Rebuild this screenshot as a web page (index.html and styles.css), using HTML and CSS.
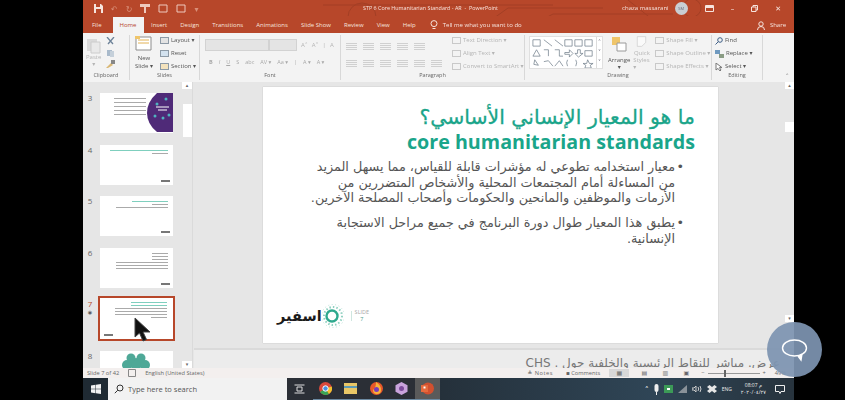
FILE: index.html
```html
<!DOCTYPE html>
<html lang="en">
<head>
  <meta charset="UTF-8" />
  <title>STP 6 Core Humanitarian Standard - AR - PowerPoint</title>
  <link rel="stylesheet" href="styles.css">
</head>
<body>
  <div class="pantalla">
    <div class="app">

      <!-- Barra de titulo -->
      <header class="titulo">
        <svg class="circuito" width="711" height="33" viewBox="0 0 711 33" fill="none" stroke="#a33f25" stroke-width="1">
          <path d="M240 5H430L470 5M265 17a14 14 0 1 0 28 0a14 14 0 1 0-28 0M300 26H400L425 8H520M440 30L470 14H590M545 0L575 24H640M600 8a9 9 0 1 0 18 0a9 9 0 1 0-18 0"/>
        </svg>
        <div class="rapido">
          <svg width="9" height="9" viewBox="0 0 9 9"><path d="M0 0H7L9 2V9H0Z" fill="#f6e4de"/><path d="M2 0H6V3H2ZM2 5H7V9H2Z" fill="#b7472a"/></svg>
          <span class="tenue">↶</span><span class="tenue">↻</span>
          <svg width="10" height="9" viewBox="0 0 10 9"><path d="M0 0H10V3H6V9H4V3H0Z" fill="#eec9bd"/></svg>
          <svg width="10" height="9" viewBox="0 0 10 9"><path d="M1 1H9V8H1Z" fill="none" stroke="#eec9bd"/></svg>
          <svg width="10" height="9" viewBox="0 0 10 9"><path d="M1 1H9V8H1Z" fill="none" stroke="#eec9bd"/></svg>
          <span class="tenue">▾</span>
        </div>
        <div class="documento">STP 6 Core Humanitarian Standard - AR  -  PowerPoint</div>
        <div class="cuenta">
          <span>chaza massarani</span>
          <span class="avatar">SM</span>
          <svg width="9" height="7" viewBox="0 0 9 7"><path d="M.5.5H8.5V6.5H.5Z" fill="none" stroke="#f6e4de"/><path d="M1 1H8V3H1Z" fill="#f6e4de"/></svg>
          <span class="ventana">–</span>
          <svg width="7" height="7" viewBox="0 0 7 7"><path d="M.5 2H5V6.5H.5ZM2 2V.5H6.5V5H5" fill="none" stroke="#f6e4de"/></svg>
          <span class="ventana">✕</span>
        </div>
      </header>

      <!-- Pestañas -->
      <nav class="pestanas">
        <a class="archivo">File</a>
        <a class="activa">Home</a>
        <a>Insert</a>
        <a>Design</a>
        <a>Transitions</a>
        <a>Animations</a>
        <a>Slide Show</a>
        <a>Review</a>
        <a>View</a>
        <a>Help</a>
        <a class="ayuda">
          <svg width="8" height="10" viewBox="0 0 8 10" fill="none" stroke="#f6e4de"><circle cx="4" cy="3.6" r="3"/><path d="M2.5 8.5H5.5"/></svg>
          Tell me what you want to do
        </a>
        <a class="compartir">
          <svg width="8" height="9" viewBox="0 0 8 9" fill="none" stroke="#f6e4de"><circle cx="4" cy="3" r="2.2"/><path d="M.5 9a3.5 3.5 0 0 1 7 0"/></svg>
          Share
        </a>
      </nav>

      <!-- Cinta de opciones -->
      <section class="cinta">
        <div class="grupo g-portapapeles">
          <div class="grupo-cuerpo">
            <div class="columna centro">
              <svg width="15" height="18" viewBox="0 0 15 18"><path d="M1 3H11V15H1Z" fill="#d9d9d9"/><path d="M5 6H14V17H5Z" fill="#e9e9e9" stroke="#ccc"/></svg>
              <span class="gris">Paste</span><span class="gris">▾</span>
            </div>
            <div class="columna iconos-mini">
              <svg width="9" height="9" viewBox="0 0 9 9" fill="none" stroke="#6d8298" stroke-width="1.3"><path d="M1 0L7 7M8 0L2 7"/></svg>
              <svg width="11" height="8" viewBox="0 0 11 8"><path d="M1 1H6V7H1Z" fill="#a9bacb"/><path d="M4 2H8V8H4Z" fill="#c5d0da"/></svg>
              <svg width="9" height="8" viewBox="0 0 9 8"><path d="M0 8L5 3L7 5L2 8Z" fill="#d9b774"/><path d="M5 0H9V4H5Z" fill="#888"/></svg>
            </div>
          </div>
          <div class="grupo-nombre">Clipboard</div>
        </div>

        <div class="grupo g-diapositivas">
          <div class="grupo-cuerpo">
            <div class="columna centro nueva">
              <svg width="17" height="15" viewBox="0 0 17 15"><path d="M1 1H16V14H1Z" fill="#fff" stroke="#8d8d8d"/><path d="M3 4H14M3 7H14" stroke="#e2b254"/><path d="M0 0H5V3H0Z" fill="#efc56a"/></svg>
              <span>New</span><span>Slide ▾</span>
            </div>
            <div class="columna filas">
              <span><i class="mini"></i>Layout ▾</span>
              <span><i class="mini azul"></i>Reset</span>
              <span><i class="mini naranja"></i>Section ▾</span>
            </div>
          </div>
          <div class="grupo-nombre">Slides</div>
        </div>

        <div class="grupo g-fuente">
          <div class="grupo-cuerpo columna-fuente">
            <div class="fila-fuente">
              <span class="caja-fuente"></span><span class="caja-tam"></span>
              <span class="gris">A˄</span><span class="gris">A˅</span><span class="gris">|</span><span class="gris">A</span>
            </div>
            <div class="fila-fuente formato">
              <b>B</b><i>I</i><u>U</u><span>S</span><span>abc</span><span>AV ▾</span><span>Aa ▾</span><span>|</span><span>A ▾</span><span>A ▾</span>
            </div>
          </div>
          <div class="grupo-nombre">Font</div>
        </div>

        <div class="grupo g-parrafo">
          <div class="grupo-cuerpo parrafo-cuerpo">
            <div class="columna-fuente">
              <div class="fila-fuente"><i class="linea"></i><i class="linea"></i><i class="linea"></i><i class="linea"></i><i class="linea"></i></div>
              <div class="fila-fuente"><i class="linea"></i><i class="linea"></i><i class="linea"></i><i class="linea"></i><i class="linea"></i><i class="linea"></i></div>
            </div>
            <div class="columna filas gris">
              <span><i class="mini tenue-mini"></i>Text Direction ▾</span>
              <span><i class="mini tenue-mini"></i>Align Text ▾</span>
              <span><i class="mini tenue-mini"></i>Convert to SmartArt ▾</span>
            </div>
          </div>
          <div class="grupo-nombre">Paragraph</div>
        </div>

        <div class="grupo g-dibujo">
          <div class="grupo-cuerpo">
            <div class="formas">
              <svg width="66" height="31" viewBox="0 0 72 34" fill="none" stroke="#6f7d8a" stroke-width=".8">
                <path d="M3 3H11V10H3ZM15 3L24 10M27 3L36 10M38 3H46V10H38ZM49 3H57V10H49ZM60 3H68V10H60Z"/>
                <path d="M7 14L11 21H3ZM15 14H20V21M27 14H32V21L36 21M38 17H43V14L47 18L43 22V19H38ZM52 14H55V18H58L53 22L49 18H52ZM60 15H68V21H60Z"/>
                <path d="M5 25L9 31L4 30ZM15 27L20 26L25 32M27 32L32 26L36 32M41 25Q39 28 41 32M50 25Q52 28 50 32M63 25L65 29L69 29L66 31L67 34H60L61 31L58 29L62 29Z"/>
              </svg>
              <div class="formas-flechas"><span>˄</span><span>˅</span><span>˅</span></div>
            </div>
            <div class="columna centro organizar">
              <svg width="17" height="17" viewBox="0 0 17 17"><path d="M1 1H9V9H1Z" fill="#efc56a"/><path d="M6 7H15V15H6Z" fill="#fff" stroke="#9a9a9a"/></svg>
              <span>Arrange</span><span>▾</span>
            </div>
            <div class="columna centro rapidos gris">
              <svg width="17" height="17" viewBox="0 0 17 17"><path d="M2 1H15V10L9 16H2Z" fill="#fafafa" stroke="#c8c8c8"/></svg>
              <span>Quick</span><span>Styles ▾</span>
            </div>
            <div class="columna filas gris">
              <span><i class="mini tenue-mini"></i>Shape Fill ▾</span>
              <span><i class="mini tenue-mini"></i>Shape Outline ▾</span>
              <span><i class="mini tenue-mini"></i>Shape Effects ▾</span>
            </div>
          </div>
          <div class="grupo-nombre">Drawing</div>
        </div>

        <div class="grupo g-edicion">
          <div class="grupo-cuerpo">
            <div class="columna filas">
              <span><svg width="8" height="8" viewBox="0 0 8 8" fill="none" stroke="#3f5f86"><circle cx="5" cy="3" r="2.3"/><path d="M3.4 4.6L.5 7.5"/></svg>Find</span>
              <span><svg width="9" height="8" viewBox="0 0 9 8"><path d="M0 0H5V4H0Z" fill="#6f9ac0"/><path d="M4 4H9V8H4Z" fill="#8a9c84"/></svg>Replace ▾</span>
              <span><svg width="8" height="8" viewBox="0 0 8 8" fill="#fff" stroke="#777"><path d="M1 0V7L3 5.4L5 8L6 7L4.4 4.6H7Z"/></svg>Select ▾</span>
            </div>
          </div>
          <div class="grupo-nombre">Editing</div>
        </div>
        <div class="plegar">˄</div>
      </section>

      <!-- Area de trabajo -->
      <main class="trabajo">
        <aside class="panel">
          <div class="miniaturas">
            <div class="mini-fila">
              <span class="numero">3</span>
              <div class="miniatura m3">
                <div class="m3-texto"><i></i><i></i><i></i><i></i><i></i></div>
                <svg class="m3-circulo" width="26" height="39" viewBox="0 0 26 39"><path d="M26 0H10Q0 9 0 20Q0 31 10 39H26Z" fill="#4f2a78"/><circle cx="10" cy="11" r="1.5" fill="#4fb3bf"/><circle cx="19" cy="6" r="1.5" fill="#4fb3bf"/><circle cx="8" cy="23" r="1.5" fill="#4fb3bf"/><circle cx="16" cy="25" r="1.5" fill="#4fb3bf"/><circle cx="22" cy="22" r="1.5" fill="#4fb3bf"/><path d="M9 14H22M11 17H20" stroke="#fff"/></svg>
              </div>
            </div>
            <div class="mini-fila">
              <span class="numero">4</span>
              <div class="miniatura">
                <i class="m-titulo"></i><i class="m-linea corta"></i>
                <i class="m-logo"></i>
              </div>
            </div>
            <div class="mini-fila">
              <span class="numero">5</span>
              <div class="miniatura">
                <i class="m-titulo corto"></i><i class="m-linea corta"></i><i class="m-linea"></i>
                <i class="m-logo"></i>
              </div>
            </div>
            <div class="mini-fila">
              <span class="numero">6</span>
              <div class="miniatura">
                <i class="m-linea corta gris2"></i><i class="m-linea corta gris2"></i><i class="m-linea corta gris2"></i><i class="m-linea gris2"></i><i class="m-linea gris2"></i><i class="m-linea gris2"></i>
                <i class="m-logo"></i>
              </div>
            </div>
            <div class="mini-fila actual">
              <span class="numero rojo">7<small>◉</small></span>
              <div class="miniatura">
                <i class="m-titulo corto"></i><i class="m-titulo corto"></i><i class="m-linea gris2"></i><i class="m-linea gris2"></i><i class="m-linea gris2"></i><i class="m-linea corta gris2"></i>
                <i class="m-logo izq"></i>
              </div>
            </div>
            <div class="mini-fila">
              <span class="numero">8</span>
              <div class="miniatura m8">
                <svg width="73" height="18" viewBox="0 0 73 18"><g fill="#4ea897"><circle cx="36" cy="13" r="6"/><circle cx="27" cy="14" r="5"/><circle cx="45" cy="14" r="5"/><circle cx="31" cy="7" r="4.5"/><circle cx="41" cy="7" r="4.5"/></g></svg>
              </div>
            </div>
            <!-- Cursor sobre la miniatura -->
            <svg class="cursor" width="18" height="26" viewBox="0 0 18 26"><path d="M1 1V20L5.500 16L9 24L12.500 22.500L9 15H16Z" fill="#111" stroke="#444"/></svg>
          </div>
          <div class="barra-panel">
            <span class="flecha">▴</span>
            <span class="pulgar"></span>
            <span class="flecha">▾</span>
          </div>
        </aside>

        <div class="editor">
          <div class="lienzo">
            <article class="diapositiva">
              <div class="encabezado">
                <h1 lang="ar" dir="rtl">ما هو المعيار الإنساني الأساسي؟</h1>
                <h2>core humanitarian standards</h2>
              </div>
              <div class="contenido" lang="ar" dir="rtl">
                <p>معيار استخدامه تطوعي له مؤشرات قابلة للقياس، مما يسهل المزيد<br>من المساءلة أمام المجتمعات المحلية والأشخاص المتضررين من<br>الأزمات والموظفين والمانحين والحكومات وأصحاب المصلحة الآخرين.</p>
                <p>يطبق هذا المعيار طوال دورة البرنامج في جميع مراحل الاستجابة<br>الإنسانية.</p>
              </div>
              <footer class="pie">
                <span class="marca" lang="ar">اسفير</span>
                <svg width="22" height="26" viewBox="0 0 22 26" fill="none"><circle cx="10" cy="13" r="5.500" stroke="#2fa98e" stroke-width="2.400"/><circle cx="11" cy="13" r="9" stroke="#8fd0c0" stroke-width="2" stroke-dasharray="1.500 2"/><circle cx="11" cy="13" r="11.500" stroke="#bfe3da" stroke-width="1" stroke-dasharray="1 2.500"/></svg>
                <span class="separador"></span>
                <span class="numero-slide">SLIDE<b>7</b></span>
              </footer>
            </article>
            <div class="barra-editor">
              <span class="flecha">▴</span>
              <span class="pulgar-editor"></span>
              <span class="flecha">▾</span>
            </div>
          </div>
          <div class="notas" lang="ar" dir="rtl">عرض. مباشر للنقاط الرئيسية والخلفية حول . CHS</div>
        </div>
      </main>

      <!-- Barra de estado -->
      <footer class="estado">
        <span class="estado-slide">Slide 7 of 42</span>
        <svg width="8" height="8" viewBox="0 0 8 8" fill="none" stroke="#888"><path d="M.5.5H7.500V7.500H.5Z"/></svg>
        <span>English (United States)</span>
        <div class="estado-der">
          <span class="notas-btn">≜ Notes</span>
          <span>▪ Comments</span>
          <span class="vista activa-vista">▦</span>
          <span class="vista">▤</span>
          <span class="vista">▥</span>
          <span class="vista">▣</span>
          <span class="zoom">−<i class="zoom-barra"><i class="zoom-pomo"></i></i>+</span>
          <span>49%</span>
        </div>
      </footer>

      <!-- Barra de tareas de Windows -->
      <footer class="tareas">
        <svg class="win" width="10" height="10" viewBox="0 0 10 10" fill="#f2f2f2"><path d="M0 1.500L4.500.8V4.700H0ZM5 .7L10 0V4.700H5ZM0 5.200H4.500V9.200L0 8.500ZM5 5.200H10V10L5 9.300Z"/></svg>
        <div class="busqueda">
          <svg width="10" height="10" viewBox="0 0 10 10" fill="none" stroke="#333"><circle cx="6" cy="4" r="3"/><path d="M3.800 6.200L.8 9.200"/></svg>
          <span>Type here to search</span>
        </div>
        <div class="apps">
          <span class="app-ico"><svg width="11" height="10" viewBox="0 0 11 10" fill="none" stroke="#ddd"><path d="M.5 1H10.500M3 3H8V7H3ZM.5 9H10.500"/></svg></span>
          <span class="app-ico"><svg width="13" height="13" viewBox="0 0 13 13"><circle cx="6.500" cy="6.500" r="6.500" fill="#d9493c"/><path d="M6.500 6.500L1 10A6.500 6.500 0 0 0 10 12Z" fill="#3aa655"/><path d="M6.500 6.500L10 12A6.500 6.500 0 0 0 12.700 4.500Z" fill="#f2c230"/><circle cx="6.500" cy="6.500" r="2.700" fill="#4a8fe0" stroke="#fff"/></svg></span>
          <span class="app-ico"><svg width="13" height="11" viewBox="0 0 13 11"><path d="M0 0H13V11H0Z" fill="#e9c766"/><path d="M0 3H13V5H0Z" fill="#5d9bb5"/></svg></span>
          <span class="app-ico"><svg width="13" height="13" viewBox="0 0 13 13"><circle cx="6.500" cy="6.500" r="6.500" fill="#e8572a"/><path d="M6 0Q11 3 11 8A4 4 0 0 1 3 8Q6 6 6 0Z" fill="#f7b23b"/><circle cx="6.500" cy="7.500" r="2.500" fill="#7a3db8"/></svg></span>
          <span class="app-ico"><svg width="13" height="13" viewBox="0 0 13 13"><path d="M6.500 0L12.500 3.200V9.800L6.500 13L.5 9.800V3.200Z" fill="#c9a3dc"/><circle cx="6.500" cy="6.500" r="2.500" fill="#7d4b9b"/></svg></span>
          <span class="app-ico abierta"><svg width="13" height="13" viewBox="0 0 13 13"><circle cx="7" cy="6.500" r="6" fill="#d2502f"/><path d="M0 3H7V10H0Z" fill="#e66a3d"/><path d="M2.500 4.500H4.500V6.500H2.500Z" fill="#fff"/></svg></span>
        </div>
        <div class="bandeja">
          <span class="t-ico">˄</span>
          <svg width="5" height="11" viewBox="0 0 5 11"><rect x=".5" width="4" height="8" rx="2" fill="#eee"/><path d="M2.500 8V11" stroke="#eee"/></svg>
          <svg width="9" height="8" viewBox="0 0 9 8"><path d="M0 0H9V8H0Z" fill="#3c9a57"/><path d="M3 3H6V5H3Z" fill="#fff"/></svg>
          <svg width="9" height="8" viewBox="0 0 9 8" fill="#8a9299"><path d="M0 8L9 0V8Z"/></svg>
          <svg width="10" height="8" viewBox="0 0 10 8" fill="none" stroke="#ccc"><path d="M0 3V5H2L4 7V1L2 3ZM6 2Q7.500 4 6 6M8 1Q10 4 8 7"/></svg>
          <svg width="10" height="9" viewBox="0 0 10 9" fill="#e6e6e6"><path d="M2.500 0L5 2L7.500 0L10 2L7.500 4L10 6L7.500 8L5 6L2.500 8L0 6L2.500 4L0 2Z"/></svg>
          <span class="idioma">ENG</span>
          <span class="reloj"><span>08:07 م</span><span>٢٠٢٠/٠٤/٢٧</span></span>
          <svg width="10" height="9" viewBox="0 0 10 9" fill="none" stroke="#eee"><path d="M.5.5H9.500V6.500H6L5 8.500L4 6.500H.5Z"/></svg>
        </div>
      </footer>
    </div>

    <!-- Boton flotante de chat -->
    <div class="chat">
      <svg width="27" height="24" viewBox="0 0 27 24" fill="none" stroke="#fff" stroke-width="1.400"><ellipse cx="13.500" cy="10" rx="12" ry="8"/><path d="M17 18L20 22L21 16" fill="#fff"/></svg>
    </div>
  </div>
</body>
</html>
```

FILE: styles.css
```css
/* Generales */
* {
  box-sizing: border-box;
}

html, body {
  margin: 0;
  height: 100%;
  overflow: hidden;
  background-color: #000;
}

body {
  font-family: "Open Sans", "DejaVu Sans", sans-serif;
  color: #444;
}

.pantalla {
  position: relative;
  width: 845px;
  height: 400px;
  padding: 0 51px 0 83px;
  background-color: #000;
}

.app {
  display: flex;
  flex-direction: column;
  width: 711px;
  height: 400px;
  filter: blur(0.5px);
}

.gris {
  color: #b5b5b5;
}

/* Barra de titulo */
.titulo {
  position: relative;
  display: flex;
  align-items: center;
  flex: 0 0 16px;
  padding: 0 11px;
  background-color: #b7472a;
  color: #f6e4de;
  font-size: 6px;
}

.circuito {
  position: absolute;
  top: 0;
  left: 0;
}

.rapido {
  position: relative;
  display: flex;
  align-items: center;
  gap: 8px;
  width: 269px;
}

.tenue {
  color: #d98f78;
  font-size: 8px;
}

.documento {
  position: relative;
  width: 220px;
  font-size: 5.400px;
  white-space: pre;
}

.cuenta {
  position: relative;
  display: flex;
  align-items: center;
  margin-left: auto;
  padding-right: 2px;
}

.cuenta > * {
  margin-left: 17px;
}

.cuenta > span:first-child {
  margin-left: 0;
}

.avatar {
  display: flex;
  align-items: center;
  justify-content: center;
  width: 13px;
  height: 13px;
  margin-left: 6px !important;
  border-radius: 50%;
  background-color: #c9ced3;
  color: #667;
  font-size: 4px;
}

.ventana {
  font-size: 7px;
}

/* Pestañas */
.pestanas {
  position: relative;
  display: flex;
  align-items: flex-end;
  flex: 0 0 17px;
  background-color: #b7472a;
  color: #f6e4de;
  font-size: 6px;
}

.pestanas a {
  display: flex;
  align-items: center;
  gap: 5px;
  height: 16px;
  padding: 0 6.500px;
  white-space: nowrap;
}

.pestanas .archivo {
  padding: 0 11px 0 9px;
}

.pestanas .activa {
  width: 31px;
  margin-right: 1px;
  padding: 0 4px;
  justify-content: center;
  background-color: #f3f3f3;
  color: #b7472a;
}

.pestanas .ayuda {
  margin-left: 1px;
}

.pestanas .compartir {
  margin-left: auto;
  padding-right: 8px;
}

/* Cinta */
.cinta {
  position: relative;
  display: flex;
  flex: 0 0 49px;
  height: 49px;
  min-height: 0;
  overflow: hidden;
  background-color: #f3f3f3;
  font-size: 6px;
  color: #555;
}

.grupo {
  display: flex;
  flex-direction: column;
  height: 45px;
  border-right: 1px solid #d8d8d8;
  margin: 2px 0;
}

.grupo-cuerpo {
  display: flex;
  flex: 1;
  gap: 5px;
  padding: 1px 3px 0;
  min-height: 0;
}

.grupo-nombre {
  flex: 0 0 9px;
  line-height: 9px;
  text-align: center;
  font-size: 5.500px;
  color: #666;
}

.g-portapapeles {
  width: 47px;
}

.g-diapositivas {
  width: 70px;
}

.g-fuente {
  width: 141px;
}

.g-parrafo {
  width: 184px;
}

.g-dibujo {
  width: 187px;
}

.g-edicion {
  width: 51px;
}

.columna {
  display: flex;
  flex-direction: column;
}

.centro {
  align-items: center;
  line-height: 7px;
}

.nueva {
  width: 24px;
  gap: 1px;
}

.nueva svg {
  margin-bottom: 3px;
}

.iconos-mini {
  gap: 3px;
  padding-top: 1px;
}

.filas {
  justify-content: space-between;
  height: 35px;
  white-space: nowrap;
  line-height: 9px;
}

.filas span {
  display: flex;
  align-items: center;
  gap: 2px;
}

.mini {
  display: inline-block;
  width: 9px;
  height: 7px;
  background-color: #e3e3e3;
  border: 1px solid #8d9aa6;
}

.azul {
  background-color: #d3e2ef;
}

.naranja {
  background-color: #f4e3bd;
}

.tenue-mini {
  border-color: #c9c9c9;
  background-color: #f3f3f3;
}

.columna-fuente {
  display: flex;
  flex-direction: column;
  gap: 5px;
  padding-top: 4px;
}

.g-fuente .columna-fuente {
  padding-left: 5px;
}

.fila-fuente {
  display: flex;
  align-items: center;
  gap: 4px;
  height: 12px;
  white-space: nowrap;
  color: #a8a8a8;
}

.caja-fuente {
  width: 64px;
  height: 12px;
  margin-right: -4px;
  background-color: #e4e4e4;
  border: 1px solid #d2d2d2;
}

.caja-tam {
  width: 28px;
  height: 12px;
  background-color: #e4e4e4;
  border: 1px solid #d2d2d2;
}

.formato {
  gap: 6px;
  padding-left: 4px;
  font-size: 5.500px;
}

.parrafo-cuerpo {
  gap: 8px;
  padding-left: 5px;
}

.linea {
  display: inline-block;
  width: 11px;
  height: 7px;
  margin-right: 2px;
  background: repeating-linear-gradient(#d0d0d0 0 1px, transparent 1px 2px);
}

.formas {
  display: flex;
  height: 33px;
  margin-left: 1px;
  background-color: #fff;
  border: 1px solid #e0e0e0;
}

.formas-flechas {
  display: flex;
  flex-direction: column;
  width: 6px;
  color: #667;
  font-size: 6px;
  line-height: 10px;
  text-align: center;
  border-left: 1px solid #dcdcdc;
}

.organizar {
  width: 25px;
  margin-left: 0;
}

.organizar svg {
  margin-bottom: 4px;
}

.rapidos {
  width: 24px;
  margin-left: -2px;
}

.rapidos svg {
  margin-bottom: 3px;
}

.plegar {
  position: absolute;
  right: 5px;
  bottom: 1px;
  color: #888;
  font-size: 7px;
}

/* Area de trabajo */
.trabajo {
  display: flex;
  flex: 0 0 286px;
  height: 286px;
  background-color: #e6e6e6;
  min-height: 0;
  overflow: hidden;
}

.panel {
  display: flex;
  flex: 0 0 110px;
  border-right: 1px solid #dadada;
}

.miniaturas {
  position: relative;
  flex: 1;
  padding-top: 11px;
  overflow: hidden;
}

.mini-fila {
  display: flex;
  height: 51.500px;
}

.numero {
  display: flex;
  flex-direction: column;
  align-items: center;
  width: 17px;
  padding-right: 3px;
  color: #666;
  font-size: 8px;
  line-height: 9px;
}

.numero small {
  font-size: 5px;
  color: #555;
}

.rojo {
  color: #b7472a;
}

.miniatura {
  position: relative;
  display: flex;
  flex-direction: column;
  align-items: flex-end;
  gap: 2px;
  width: 73px;
  height: 40px;
  padding: 5px 5px 0;
  background-color: #fff;
}

.actual .miniatura {
  width: 77px;
  height: 45px;
  margin: -3px 0 0 -2px;
  padding: 4px 6px 0;
  border: 2px solid #b7472a;
}

.m-titulo {
  width: 58px;
  height: 1px;
  background-color: #7fcfbe;
}

.corto {
  width: 36px;
}

.m-linea {
  width: 52px;
  height: 1px;
  background-color: #aaa;
}

.corta {
  width: 16px;
}

.gris2 {
  background-color: #aaa;
}

.m-logo {
  position: absolute;
  right: 3px;
  bottom: 3px;
  width: 9px;
  height: 2px;
  background-color: #777;
}

.izq {
  right: auto;
  left: 4px;
}

.m3-texto {
  display: flex;
  flex-direction: column;
  align-items: flex-end;
  gap: 3px;
  width: 44px;
  margin-right: 22px;
}

.m3-texto i {
  width: 32px;
  height: 1px;
  background-color: #aaa;
}

.m3-circulo {
  position: absolute;
  top: 0;
  right: 0;
}

.m8 {
  padding: 0;
  background-color: #fff;
}

.cursor {
  position: absolute;
  top: 235px;
  left: 51px;
}

.barra-panel,
.barra-editor {
  display: flex;
  flex-direction: column;
  align-items: center;
  flex: 0 0 10px;
  color: #666;
  font-size: 5px;
  line-height: 7px;
}

.flecha {
  flex: 0 0 7px;
  width: 100%;
  text-align: center;
  background-color: #fff;
}

.pulgar {
  width: 9px;
  height: 33px;
  margin: 15px 0 auto;
  background-color: #fff;
}

.pulgar-editor {
  width: 9px;
  height: 10px;
  margin: 33px 0 auto;
  background-color: #fff;
}

.editor {
  display: flex;
  flex-direction: column;
  flex: 1;
  min-width: 0;
  padding-left: 1px;
}

.lienzo {
  display: flex;
  flex: 1;
  align-items: flex-start;
  justify-content: space-between;
  padding-left: 69px;
  min-height: 0;
  border-bottom: 2px solid #dadada;
}

.barra-editor {
  flex-basis: 9px;
  height: 240px;
}

/* Diapositiva */
.diapositiva {
  display: flex;
  flex-direction: column;
  width: 455px;
  height: 256px;
  margin-top: 5px;
  background-color: #fff;
  box-shadow: 0 0 1px rgba(0, 0, 0, 0.25);
}

.encabezado {
  padding: 16px 23px 0 0;
  text-align: right;
  color: #1aa58a;
}

.encabezado h1 {
  margin: 0;
  font-family: "DejaVu Sans", sans-serif;
  font-size: 20.400px;
  font-weight: normal;
  line-height: 28px;
  -webkit-text-stroke: 0.3px #1aa58a;
}

.encabezado h2 {
  margin: 0;
  font-family: "Open Sans", sans-serif;
  font-size: 19.700px;
  font-weight: bold;
  line-height: 21px;
}

.contenido {
  padding: 7px 36px 0 0;
  font-family: "DejaVu Sans", sans-serif;
  font-size: 12.800px;
  line-height: 15.700px;
  color: #555;
}

.contenido p {
  position: relative;
  margin: 0 7px 9px 0;
  white-space: nowrap;
}

.contenido p::before {
  content: "•";
  position: absolute;
  top: 0;
  right: -9px;
}

.pie {
  display: flex;
  align-items: center;
  margin-top: auto;
  padding: 0 0 14px 14px;
}

.marca {
  color: #1b1b1b;
  font-family: "DejaVu Sans", sans-serif;
  font-size: 14.500px;
  font-weight: bold;
}

.separador {
  width: 1px;
  height: 10px;
  margin: 0 3px 0 7px;
  background-color: #cfe6df;
}

.numero-slide {
  display: flex;
  flex-direction: column;
  align-items: center;
  color: #a9a9a9;
  font-size: 5.500px;
  line-height: 7px;
}

.numero-slide b {
  font-weight: normal;
  color: #4a9c8c;
}

.notas {
  flex: 0 0 18px;
  padding: 0 14px 0 0;
  overflow: hidden;
  white-space: nowrap;
  color: #777;
  font-family: "DejaVu Sans", sans-serif;
  font-size: 12px;
  line-height: 26px;
  background-color: #ececec;
}

/* Barra de estado */
.estado {
  display: flex;
  align-items: center;
  gap: 9px;
  flex: 0 0 10px;
  padding-left: 4px;
  background-color: #f3efee;
  color: #666;
  font-size: 5.700px;
  white-space: nowrap;
}

.estado-der {
  display: flex;
  align-items: center;
  gap: 9px;
  margin-left: auto;
  margin-right: 8px;
}

.notas-btn {
  margin-right: 4px;
  letter-spacing: 0.5px;
}

.vista {
  width: 12px;
  text-align: center;
  font-size: 6px;
}

.activa-vista {
  width: 20px;
  background-color: #d8d8d8;
}

.zoom {
  display: flex;
  align-items: center;
  gap: 3px;
}

.zoom-barra {
  position: relative;
  display: inline-block;
  width: 52px;
  height: 1px;
  background-color: #999;
}

.zoom-pomo {
  position: absolute;
  top: -3px;
  left: 16px;
  width: 2px;
  height: 7px;
  background-color: #666;
}

/* Barra de tareas */
.tareas {
  display: flex;
  align-items: center;
  flex: 1;
  min-height: 0;
  background: linear-gradient(90deg, #1f2a33, #232d36 45%, #2f4556 80%, #27333d);
  color: #eee;
  font-size: 6px;
}

.win {
  margin: 0 7px 0 8px;
}

.busqueda {
  display: flex;
  align-items: center;
  gap: 4px;
  width: 179px;
  height: 100%;
  padding-left: 6px;
  background-color: #f2f2f2;
  color: #555;
  font-size: 7.500px;
}

.apps {
  display: flex;
  height: 100%;
  background-color: #2b2f36;
}

.app-ico {
  display: flex;
  align-items: center;
  justify-content: center;
  width: 25.500px;
  height: 100%;
  border-bottom: 1px solid #6d8ba3;
}

.app-ico:first-child {
  border-bottom: none;
}

.abierta {
  background-color: #5a5a5a;
}

.bandeja {
  display: flex;
  align-items: center;
  gap: 5px;
  margin-left: auto;
  padding-right: 9px;
}

.t-ico {
  font-size: 8px;
}

.idioma {
  font-size: 5px;
}

.reloj {
  display: flex;
  flex-direction: column;
  align-items: center;
  margin: 0 4px;
  font-size: 5px;
  line-height: 7px;
}

/* Boton flotante */
.chat {
  position: absolute;
  left: 767px;
  top: 322px;
  display: flex;
  align-items: center;
  justify-content: center;
  width: 55px;
  height: 55px;
  border-radius: 50%;
  background-color: rgba(125, 147, 176, 0.93);
  filter: blur(0.4px);
}
```
